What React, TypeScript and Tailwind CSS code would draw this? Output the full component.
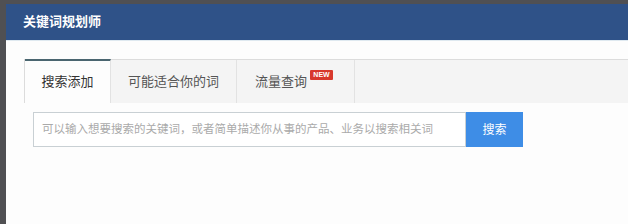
const TABS = [
  { label: "搜索添加", width: "w-[86px]", active: true },
  { label: "可能适合你的词", width: "w-[126px]", active: false },
  { label: "流量查询", width: "w-[118px]", active: false, badge: true },
]

const App = () => {
  return (
    <div
      className="flex h-[224px] w-[628px] bg-[#505053] pl-[6px] pt-[4px]"
      style={{ fontFamily: '"Liberation Sans", "Noto Sans CJK SC", sans-serif' }}
    >
      <div className="flex flex-1 flex-col bg-[#fdfdfd]">
        <div className="flex h-[37px] items-center border-b border-[#dfe9f0] bg-[#2f5288] pl-[17px]">
          <span className="text-[13px] font-bold text-white">关键词规划师</span>
        </div>

        <div className="pl-[18px] pt-[18px]">
          <div className="flex h-[44px] border-t border-l border-[#dcdcdc] bg-[#f4f4f4]">
            {TABS.map((tab) => (
              <div
                key={tab.label}
                className={`flex ${tab.width} items-center border-r border-[#e2e2e2] text-[13px] ${
                  tab.badge ? "pl-[18px]" : "justify-center"
                } ${
                  tab.active
                    ? "-mt-px border-t-2 border-t-[#4a6670] bg-[#fdfdfd] text-[#333]"
                    : "text-[#555]"
                }`}
              >
                {tab.label}
                {tab.badge && (
                  <span className="mb-[14px] ml-[3px] flex h-[10px] w-[23px] items-center justify-center rounded-[1px] bg-[#d8392c] text-[7px] font-bold leading-none text-white">
                    NEW
                  </span>
                )}
              </div>
            ))}
          </div>

          <div className="ml-[9px] mt-[9px] flex h-[35px]">
            <div className="flex w-[433px] items-center border border-[#c9d0d4] bg-white pl-[8px] text-[11.5px] text-[#aaa]">
              可以输入想要搜索的关键词，或者简单描述你从事的产品、业务以搜索相关词
            </div>
            <button
              type="button"
              className="flex w-[57px] items-center justify-center bg-[#3e8de6] text-[12px] text-white"
            >
              搜索
            </button>
          </div>
        </div>
      </div>
    </div>
  )
}

export default App
